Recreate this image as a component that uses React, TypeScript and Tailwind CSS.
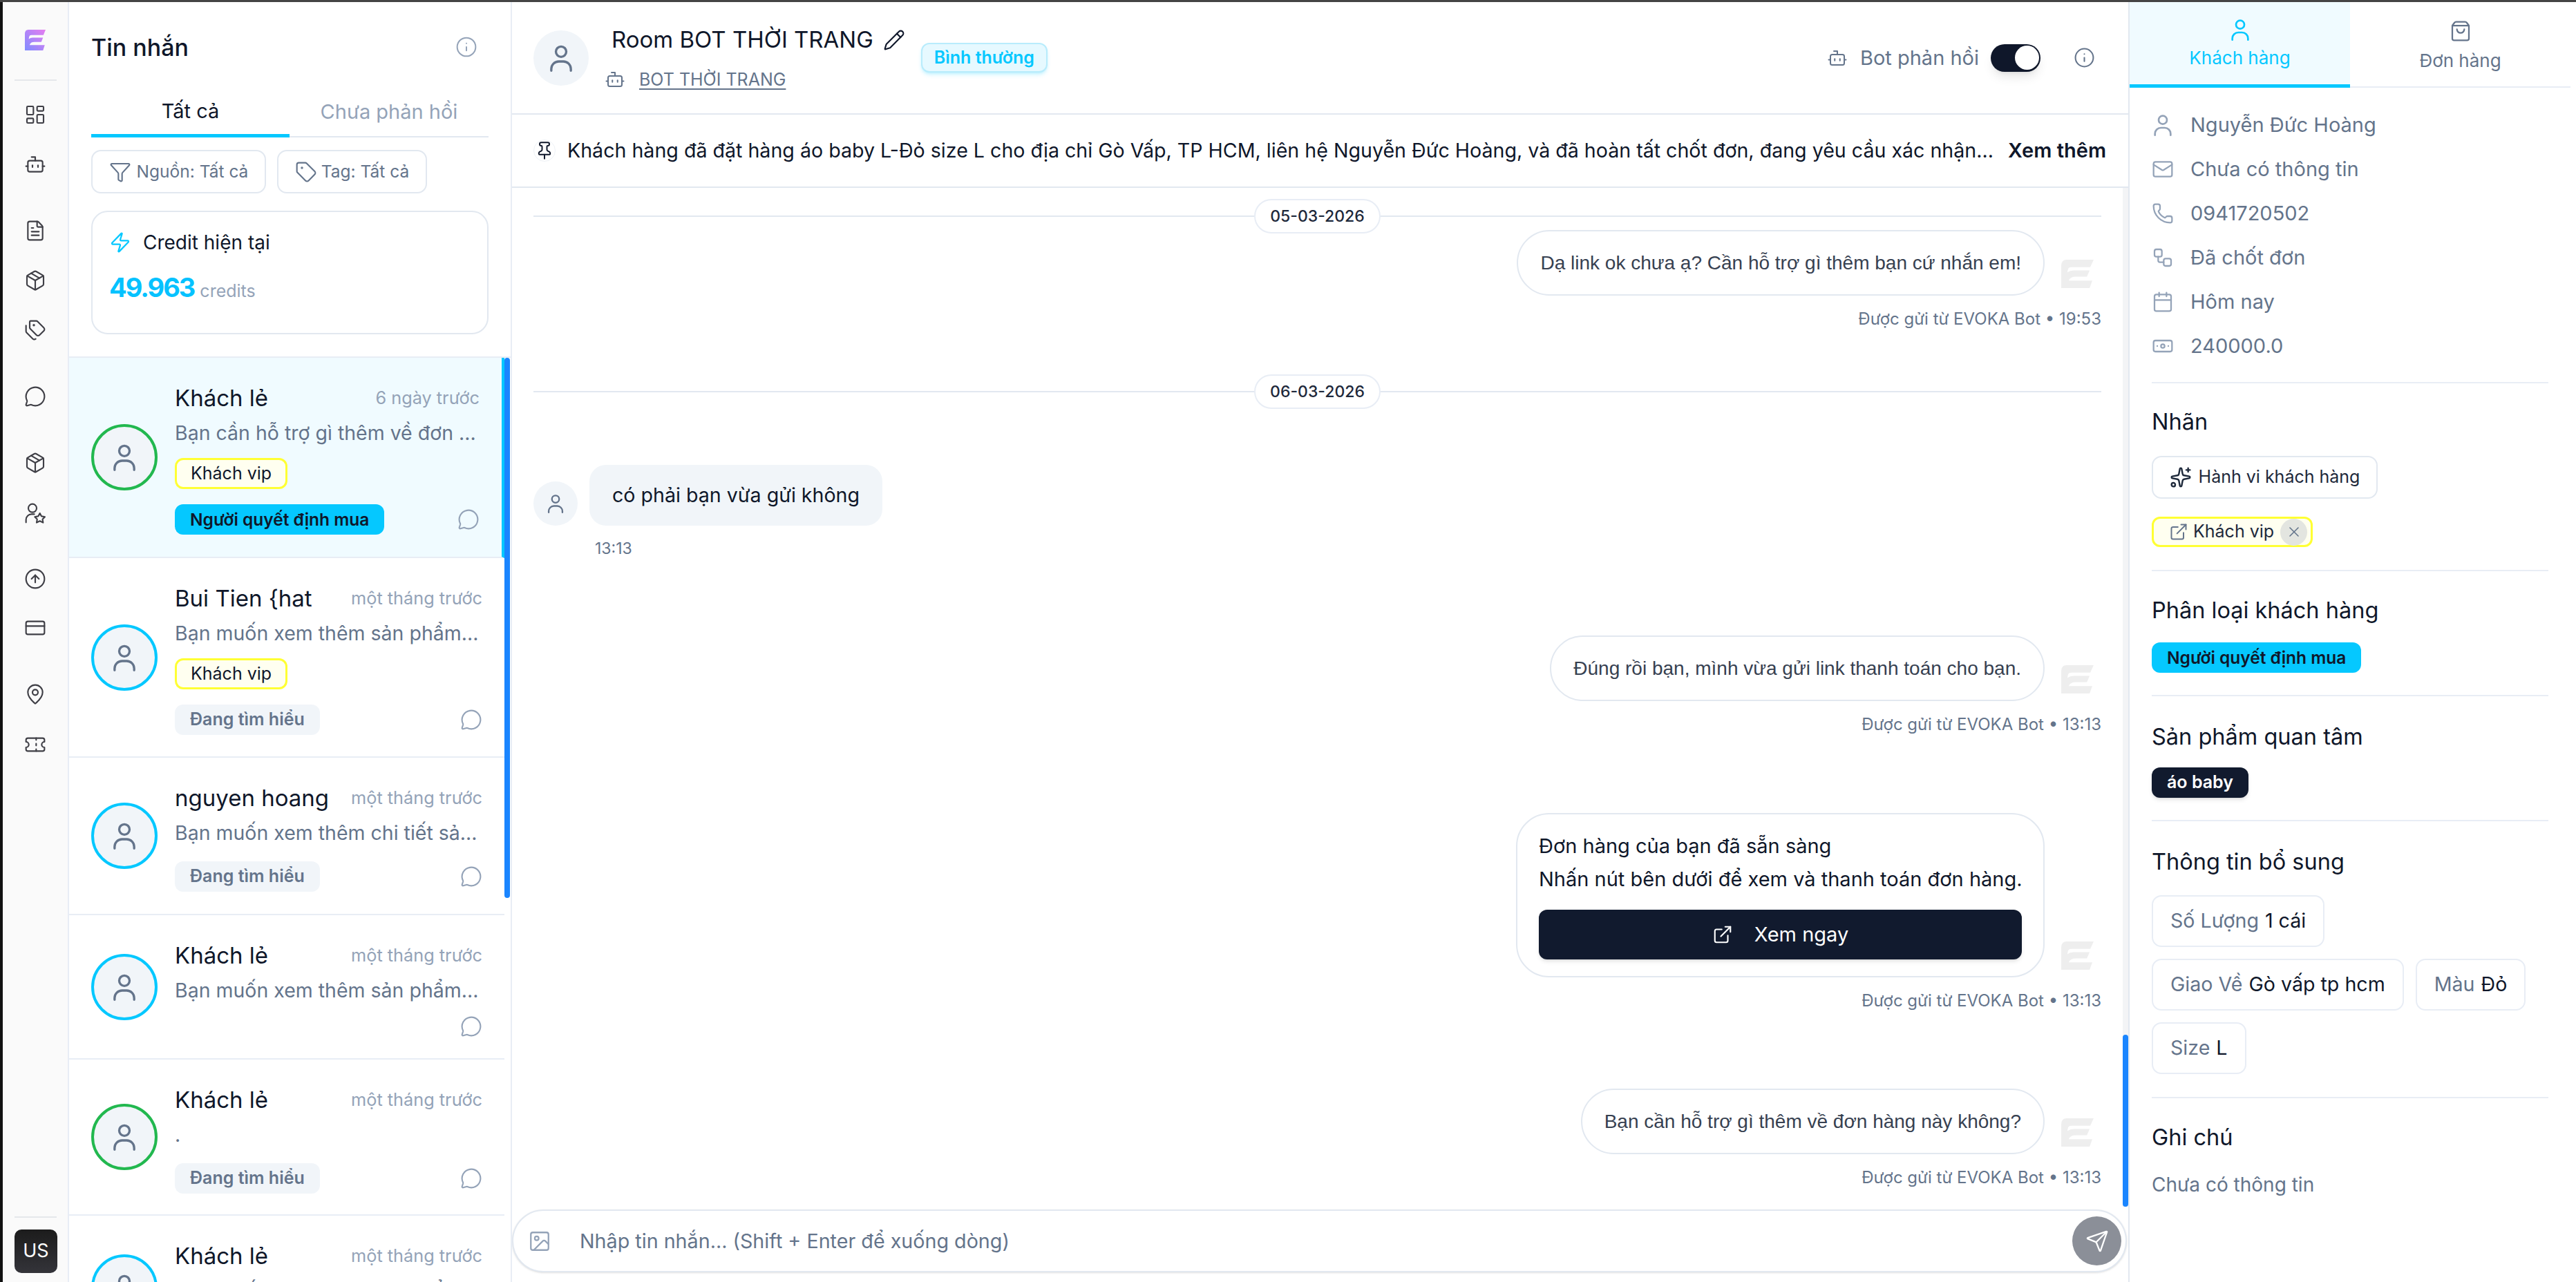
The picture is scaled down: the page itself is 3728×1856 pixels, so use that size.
import React from "react";
import {
  LayoutDashboard,
  Bot,
  FileText,
  Package,
  Tags,
  MessageCircle,
  CircleArrowUp,
  CreditCard,
  MapPin,
  Ticket,
  Info,
  Funnel,
  Tag,
  Zap,
  Pencil,
  Pin,
  Image,
  Send,
  Mail,
  Phone,
  Workflow,
  Calendar,
  Banknote,
  ExternalLink,
  Sparkles,
  X,
  ShoppingBag,
} from "lucide-react";

const EVOKA_PATH =
  "M8 0H48L43 11H15Q11 11 10 14L9 19Q13 16 18 16H42L38 25H22Q13 25 11 31H46L42 42H0V9Q0 0 8 0Z";

const Person = ({ className }: { className: string }) => (
  <svg viewBox="0 0 24 24" fill="none" stroke="currentColor" strokeWidth="2" strokeLinecap="round" className={className}>
    <circle cx="12" cy="6.5" r="4.5" />
    <path d="M3.5 23v-1.5a6.5 6.5 0 0 1 6.5-6.5h4a6.5 6.5 0 0 1 6.5 6.5V23" />
  </svg>
);

const UserStarIcon = ({ className }: { className: string }) => (
  <svg viewBox="0 0 24 24" fill="none" stroke="currentColor" strokeWidth="1.6" strokeLinecap="round" strokeLinejoin="round" className={className}>
    <circle cx="9" cy="6.5" r="4.5" />
    <path d="M2 22v-3a6 6 0 0 1 6-6h3" />
    <path d="m17 12 1.8 3.3 3.7.6-2.6 2.6.6 3.7-3.5-1.7-3.5 1.7.6-3.7-2.6-2.6 3.7-.6z" />
  </svg>
);

const Logo = () => (
  <svg viewBox="0 0 48 42" className="h-[30px] w-[30px]" preserveAspectRatio="none">
    <defs>
      <linearGradient id="evokaGrad" x1="0" y1="1" x2="1" y2="0">
        <stop offset="0" stopColor="#7f8cff" />
        <stop offset="1" stopColor="#e77df0" />
      </linearGradient>
    </defs>
    <path d={EVOKA_PATH} fill="url(#evokaGrad)" />
  </svg>
);

const Watermark = () => (
  <svg viewBox="0 0 48 42" className="mb-[11px] ml-[24px] h-[41px] w-[47px] shrink-0">
    <path d={EVOKA_PATH} fill="#eeeeee" />
  </svg>
);

const navIconClass = "h-[32px] w-[32px] text-[#3f3f46]";

const Nav = () => (
  <nav className="flex w-[96px] shrink-0 flex-col items-center border-r-2 border-[#e8edf5] bg-[#fafafa]">
    <div className="mt-[40px]">
      <Logo />
    </div>
    <div className="mt-[42px] h-[2px] w-[61px] bg-[#e5e7eb]" />
    <div className="mt-[33px]"><LayoutDashboard strokeWidth={1.6} className={navIconClass} /></div>
    <div className="mt-[40px]"><Bot strokeWidth={1.6} className={navIconClass} /></div>
    <div className="mt-[64px]"><FileText strokeWidth={1.6} className={navIconClass} /></div>
    <div className="mt-[40px]"><Package strokeWidth={1.6} className={navIconClass} /></div>
    <div className="mt-[40px]"><Tags strokeWidth={1.6} className={navIconClass} /></div>
    <div className="mt-[64px]"><MessageCircle strokeWidth={1.6} className={navIconClass} /></div>
    <div className="mt-[64px]"><Package strokeWidth={1.6} className={navIconClass} /></div>
    <div className="mt-[41px]"><UserStarIcon className={navIconClass} /></div>
    <div className="mt-[63px]"><CircleArrowUp strokeWidth={1.6} className={navIconClass} /></div>
    <div className="mt-[39px]"><CreditCard strokeWidth={1.6} className={navIconClass} /></div>
    <div className="mt-[64px]"><MapPin strokeWidth={1.6} className={navIconClass} /></div>
    <div className="mt-[41px]"><Ticket strokeWidth={1.6} className={navIconClass} /></div>
    <div className="mt-auto h-[2px] w-[61px] bg-[#e5e7eb]" />
    <div className="ml-[2px] mb-[13px] mt-[17px] flex h-[63px] w-[62px] items-center justify-center rounded-[10px] bg-gradient-to-b from-[#1c1c1c] to-[#34343a] text-[27px] text-white">
      US
    </div>
  </nav>
);

type Conversation = {
  name: string;
  time: string;
  preview: string;
  ring: string;
  pb: string;
  vip?: boolean;
  stage?: "buyer" | "looking";
  selected?: boolean;
};

const conversations: Conversation[] = [
  { name: "Khách lẻ", time: "6 ngày trước", preview: "Bạn cần hỗ trợ gì thêm về đơn ...", ring: "border-[#22b84f]", pb: "pb-[32px]", vip: true, stage: "buyer", selected: true },
  { name: "Bui Tien {hat", time: "một tháng trước", preview: "Bạn muốn xem thêm sản phẩm...", ring: "border-[#05c8ff]", pb: "pb-[31px]", vip: true, stage: "looking" },
  { name: "nguyen hoang", time: "một tháng trước", preview: "Bạn muốn xem thêm chi tiết sả...", ring: "border-[#05c8ff]", pb: "pb-[32px]", stage: "looking" },
  { name: "Khách lẻ", time: "một tháng trước", preview: "Bạn muốn xem thêm sản phẩm...", ring: "border-[#05c8ff]", pb: "pb-[30px]" },
  { name: "Khách lẻ", time: "một tháng trước", preview: ".", ring: "border-[#22b84f]", pb: "pb-[30px]", stage: "looking" },
  { name: "Khách lẻ", time: "một tháng trước", preview: "Bạn muốn xem thêm sản phẩm...", ring: "border-[#05c8ff]", pb: "pb-[30px]" },
];

const VipChip = () => (
  <div className="flex h-[45px] w-fit items-center rounded-[12px] border-[3px] border-[#ffff33] bg-[#fffff0] px-[20px] text-[25px] text-[#0f172a]">
    Khách vip
  </div>
);

const ConversationRow = ({ c }: { c: Conversation }) => (
  <div className={`flex items-center border-b-2 border-[#e8edf5] pl-[32px] pr-[32px] ${c.selected ? "border-r-4 border-r-[#05c8ff] bg-[#f0fbff]" : ""}`}>
    <div className={`flex h-[96px] w-[96px] shrink-0 items-center justify-center rounded-full border-4 bg-[#f1f5f9] ${c.ring}`}>
      <Person className="h-[40px] w-[40px] text-[#64748b]" />
    </div>
    <div className={`ml-[25px] min-w-0 flex-1 pt-[38px] ${c.pb}`}>
      <div className="flex h-[40px] items-center justify-between">
        <span className="text-[33px] leading-[40px] text-[#0f172a]">{c.name}</span>
        <span className="text-[25.3px] text-[#94a3b8]">{c.time}</span>
      </div>
      <div className="mt-[11px] h-[40px] whitespace-nowrap text-[28.5px] leading-[40px] text-[#64748b]">{c.preview}</div>
      {c.vip && (
        <div className="mt-[16px]">
          <VipChip />
        </div>
      )}
      <div className={`flex items-center justify-between ${c.vip ? "mt-[22px]" : c.stage ? "mt-[21px]" : "mt-[16px]"}`}>
        {c.stage === "buyer" && (
          <div className="flex h-[44px] items-center rounded-[12px] bg-[#05c8ff] px-[22px] text-[24.5px] font-semibold text-[#0f172a]">
            Người quyết định mua
          </div>
        )}
        {c.stage === "looking" && (
          <div className="flex h-[44px] items-center rounded-[12px] bg-[#f1f5f9] px-[22px] text-[25px] font-semibold text-[#64748b]">
            Đang tìm hiểu
          </div>
        )}
        <MessageCircle strokeWidth={1.6} className="ml-auto h-[32px] w-[32px] text-[#94a3b8]" />
      </div>
    </div>
  </div>
);

const ConversationPanel = () => (
  <aside className="relative flex w-[641px] shrink-0 flex-col overflow-hidden border-r-2 border-[#e8edf5] bg-white">
    <div className="px-[32px]">
      <div className="flex h-[130px] items-center justify-between pr-[16px]">
        <h1 className="text-[34px] font-medium text-[#0f172a]">Tin nhắn</h1>
        <Info strokeWidth={1.5} className="h-[32px] w-[32px] text-[#94a3b8]" />
      </div>
      <div className="flex h-[66px] border-b-2 border-[#e2e8f0]">
        <div className="-mb-[2px] flex w-[287px] items-center justify-center border-b-[5px] border-[#05c8ff] pb-[6px] text-[29px] text-[#0f172a]">Tất cả</div>
        <div className="flex flex-1 items-center justify-center pb-[6px] text-[29px] text-[#94a3b8]">Chưa phản hồi</div>
      </div>
      <div className="mt-[18px] flex gap-[16px]">
        <div className="flex h-[63px] w-[253px] items-center justify-center gap-[8px] rounded-[14px] border-2 border-[#e2e8f0] text-[24.5px] text-[#64748b]">
          <Funnel strokeWidth={1.6} className="h-[32px] w-[32px]" />
          Nguồn: Tất cả
        </div>
        <div className="flex h-[63px] w-[217px] items-center justify-center gap-[6px] rounded-[14px] border-2 border-[#e2e8f0] text-[24.5px] text-[#64748b]">
          <Tag strokeWidth={1.6} className="h-[32px] w-[32px]" />
          Tag: Tất cả
        </div>
      </div>
      <div className="mt-[25px] h-[179px] rounded-[24px] border-2 border-[#e2e8f0] px-[24px] pt-[23px]">
        <div className="flex items-center gap-[17px] text-[28px] text-[#0f172a]">
          <Zap strokeWidth={1.7} className="h-[32px] w-[32px] text-[#05c8ff]" />
          Credit hiện tại
        </div>
        <div className="mt-[16px] flex items-baseline gap-[8px]">
          <span className="text-[38px] font-bold tracking-[-2px] text-[#05c2ff]">49.963</span>
          <span className="text-[25px] text-[#94a3b8]">credits</span>
        </div>
      </div>
    </div>
    <div className="mt-[32px] border-t-2 border-[#e8edf5] pr-[9px]">
      {conversations.map((c, i) => (
        <ConversationRow key={i} c={c} />
      ))}
    </div>
    <div className="absolute right-[1px] top-[515px] h-[782px] w-[8px] rounded-[4px] bg-[#1a85ff]" />
  </aside>
);

const DateSeparator = ({ label, className }: { label: string; className: string }) => (
  <div className={`flex h-[50px] items-center ${className}`}>
    <div className="h-[2px] flex-1 bg-[#e2e8f0]" />
    <div className="flex h-[50px] w-[183px] items-center justify-center rounded-full border-2 border-[#e8edf5] bg-white text-[23px] font-medium text-[#1e293b]">
      {label}
    </div>
    <div className="h-[2px] flex-1 bg-[#e2e8f0]" />
  </div>
);

const BotMessage = ({ time, className, children }: { time: string; className: string; children: React.ReactNode }) => (
  <div className={`flex flex-col items-end ${className}`}>
    <div className="flex items-end pr-[11px]">{children}<Watermark /></div>
    <div className="mt-[20px] text-[24px] leading-[28px] text-[#64748b]">Được gửi từ EVOKA Bot • {time}</div>
  </div>
);

const TextBubble = ({ text }: { text: string }) => (
  <div className="flex h-[95px] items-center rounded-[48px] border-2 border-[#e2e8f0] bg-white px-[32px] font-['Liberation_Sans',sans-serif] text-[28px] text-[#374151]">
    {text}
  </div>
);

const ChatHeader = () => (
  <header className="flex h-[163px] shrink-0 items-center border-b-2 border-[#e2e8f0] pl-[31px] pr-[48px]">
    <div className="flex h-[80px] w-[80px] items-center justify-center rounded-full bg-[#f1f5f9]">
      <Person className="h-[40px] w-[40px] text-[#64748b]" />
    </div>
    <div className="ml-[33px]">
      <div className="flex items-center gap-[14px] text-[33px] text-[#0f172a]">
        Room BOT THỜI TRANG
        <Pencil strokeWidth={1.6} className="h-[32px] w-[32px]" />
      </div>
      <div className="mt-[14px] flex items-center gap-[20px] text-[25px] text-[#64748b]">
        <Bot strokeWidth={1.6} className="-ml-[10px] h-[30px] w-[30px]" />
        <span className="underline underline-offset-4">BOT THỜI TRANG</span>
      </div>
    </div>
    <div className="ml-[23px] flex h-[43px] w-[183px] items-center justify-center rounded-[12px] border-2 border-[#b8ecfc] bg-[#e6f9ff] text-[25px] font-semibold text-[#05c8ff] shadow-md shadow-[#05c8ff]/20">
      Bình thường
    </div>
    <div className="ml-auto flex items-center">
      <Bot strokeWidth={1.6} className="h-[30px] w-[30px] text-[#64748b]" />
      <span className="ml-[18px] text-[29px] text-[#64748b]">Bot phản hồi</span>
      <div className="ml-[17px] flex h-[40px] w-[72px] items-center justify-end rounded-full bg-[#0f172a] px-[2px] shadow-lg">
        <div className="h-[35px] w-[35px] rounded-full bg-white" />
      </div>
      <Info strokeWidth={1.6} className="ml-[48px] h-[31px] w-[31px] text-[#64748b]" />
    </div>
  </header>
);

const ChatPanel = () => (
  <main className="relative flex min-w-0 flex-1 flex-col overflow-hidden">
    <ChatHeader />
    <div className="flex h-[106px] shrink-0 items-center border-b-2 border-[#e2e8f0] pl-[31px] pr-[32px] text-[28.6px] text-[#0f172a]">
      <span className="flex h-[32px] w-[32px] shrink-0 items-center justify-center rounded-full border border-[#eef2f6]">
        <Pin strokeWidth={1.7} className="h-[28px] w-[28px]" />
      </span>
      <span className="ml-[17px] min-w-0 flex-1 whitespace-nowrap">
        Khách hàng đã đặt hàng áo baby L-Đỏ size L cho địa chỉ Gò Vấp, TP HCM, liên hệ Nguyễn Đức Hoàng, và đã hoàn tất chốt đơn, đang yêu cầu xác nhận...
      </span>
      <span className="ml-[20px] shrink-0 text-[29px] font-semibold">Xem thêm</span>
    </div>
    <div className="flex min-h-0 flex-1">
      <div className="min-w-0 flex-1 pl-[31px] pr-[39px] pt-[16px]">
        <DateSeparator label="05-03-2026" className="" />
        <BotMessage time="19:53" className="-mt-[5px]">
          <TextBubble text="Dạ link ok chưa ạ? Cần hỗ trợ gì thêm bạn cứ nhắn em!" />
        </BotMessage>
        <DateSeparator label="06-03-2026" className="mt-[66px]" />
        <div className="mt-[81px] flex items-center">
          <div className="mt-[24px] flex h-[64px] w-[64px] items-center justify-center rounded-full bg-[#f1f5f9]">
            <Person className="h-[28px] w-[28px] text-[#64748b]" />
          </div>
          <div className="ml-[17px] flex h-[88px] items-center rounded-[24px] bg-[#f1f5f9] px-[33px] text-[28.6px] text-[#0f172a]">
            có phải bạn vừa gửi không
          </div>
        </div>
        <div className="ml-[89px] mt-[19px] text-[23px] leading-[28px] text-[#64748b]">13:13</div>
        <BotMessage time="13:13" className="mt-[112px]">
          <TextBubble text="Đúng rồi bạn, mình vừa gửi link thanh toán cho bạn." />
        </BotMessage>
        <BotMessage time="13:13" className="mt-[114px]">
          <div className="w-[765px] rounded-[48px] border-2 border-[#e2e8f0] bg-white px-[31px] pt-[22px]">
            <div className="text-[29px] leading-[48px] text-[#0f172a]">Đơn hàng của bạn đã sẵn sàng</div>
            <div className="whitespace-nowrap text-[29px] leading-[48px] text-[#0f172a]">Nhấn nút bên dưới để xem và thanh toán đơn hàng.</div>
            <div className="mb-[24px] mt-[20px] flex h-[72px] items-center justify-center gap-[31px] rounded-[12px] bg-[#111a2e] text-[29px] text-white shadow-md">
              <ExternalLink strokeWidth={1.7} className="h-[30px] w-[30px]" />
              Xem ngay
            </div>
          </div>
        </BotMessage>
        <BotMessage time="13:13" className="mt-[113px]">
          <TextBubble text="Bạn cần hỗ trợ gì thêm về đơn hàng này không?" />
        </BotMessage>
      </div>
    </div>
    <div className="mb-[14px] mr-[2px] flex h-[91px] shrink-0 items-center rounded-[46px] border-2 border-[#e2e8f0] bg-white pl-[21px] pr-[6px] shadow-sm">
      <Image strokeWidth={1.6} className="h-[34px] w-[34px] text-[#94a3b8]" />
      <span className="ml-[41px] text-[28.7px] text-[#64748b]">Nhập tin nhắn... (Shift + Enter để xuống dòng)</span>
      <div className="ml-auto flex h-[71px] w-[71px] items-center justify-center rounded-full bg-[#8b8f98]">
        <Send strokeWidth={1.6} className="h-[34px] w-[34px] text-white" />
      </div>
    </div>
    <div className="absolute right-0 top-[269px] h-[1475px] w-[8px] bg-[#f3f4f6]">
      <div className="absolute bottom-0 h-[249px] w-full rounded-[4px] bg-[#1a85ff]" />
    </div>
  </main>
);

const infoRows = [
  { Icon: Person, text: "Nguyễn Đức Hoàng" },
  { Icon: Mail, text: "Chưa có thông tin" },
  { Icon: Phone, text: "0941720502" },
  { Icon: Workflow, text: "Đã chốt đơn" },
  { Icon: Calendar, text: "Hôm nay" },
  { Icon: Banknote, text: "240000.0" },
];

const attributes = [
  { k: "Số Lượng", v: "1 cái" },
  { k: "Giao Về", v: "Gò vấp tp hcm" },
  { k: "Màu", v: "Đỏ" },
  { k: "Size", v: "L" },
];

const SectionTitle = ({ children }: { children: React.ReactNode }) => (
  <h2 className="text-[32.5px] leading-[40px] text-[#0f172a]">{children}</h2>
);

const CustomerPanel = () => (
  <aside className="w-[648px] shrink-0 border-l-2 border-[#e2e8f0] pr-[8px]">
    <div className="flex h-[124px] border-b-2 border-[#e8edf5]">
      <div className="-mb-[2px] flex w-[319px] flex-col items-center border-b-[5px] border-[#05c8ff] bg-[#f0fbff] pt-[24px] text-[26px] text-[#05c8ff]">
        <Person className="h-[32px] w-[32px]" />
        <span className="mt-[5px]">Khách hàng</span>
      </div>
      <div className="flex flex-1 flex-col items-center pt-[26px] text-[26px] text-[#64748b]">
        <ShoppingBag strokeWidth={1.7} className="h-[32px] w-[32px]" />
        <span className="mt-[7px]">Đơn hàng</span>
      </div>
    </div>
    <div className="px-[32px]">
      <div className="flex flex-col gap-[24px] pt-[34px]">
        {infoRows.map(({ Icon, text }) => (
          <div key={text} className="flex h-[40px] items-center gap-[24px] text-[29px] text-[#64748b]">
            <Icon strokeWidth={1.7} className="h-[32px] w-[32px] text-[#94a3b8]" />
            {text}
          </div>
        ))}
      </div>
      <div className="mt-[32px] border-t-2 border-[#e8edf5] pt-[36px]">
        <SectionTitle>Nhãn</SectionTitle>
        <div className="mt-[29px] flex h-[62px] w-[327px] items-center justify-center gap-[10px] rounded-[14px] border-2 border-[#e2e8f0] text-[25px] text-[#1e293b]">
          <Sparkles strokeWidth={1.8} className="h-[32px] w-[32px]" />
          Hành vi khách hàng
        </div>
        <div className="mt-[26px] flex h-[44px] w-[233px] items-center rounded-[12px] border-[3px] border-[#ffff33] bg-[#fffff0] pl-[22px] pr-[5px] text-[25px] text-[#1e293b]">
          <ExternalLink strokeWidth={1.7} className="h-[28px] w-[28px] text-[#64748b]" />
          <span className="ml-[7px]">Khách vip</span>
          <span className="ml-auto flex h-[39px] w-[39px] items-center justify-center rounded-full bg-[#e3e5e0]">
            <X strokeWidth={1.6} className="h-[24px] w-[24px] text-[#64748b]" />
          </span>
        </div>
      </div>
      <div className="mt-[33px] border-t-2 border-[#e8edf5] pt-[37px]">
        <SectionTitle>Phân loại khách hàng</SectionTitle>
        <div className="mt-[26px] flex h-[44px] w-fit items-center rounded-[12px] bg-[#05c8ff] px-[22px] text-[24.5px] font-semibold text-[#0f172a]">
          Người quyết định mua
        </div>
      </div>
      <div className="mt-[32px] border-t-2 border-[#e8edf5] pt-[39px]">
        <SectionTitle>Sản phẩm quan tâm</SectionTitle>
        <div className="mt-[24px] flex h-[44px] w-fit items-center rounded-[12px] bg-[#111a2e] px-[22px] text-[25px] font-semibold text-white shadow-md">
          áo baby
        </div>
      </div>
      <div className="mt-[32px] border-t-2 border-[#e8edf5] pt-[39px]">
        <SectionTitle>Thông tin bổ sung</SectionTitle>
        <div className="mt-[28px] flex flex-wrap gap-[17px]">
          {attributes.map((a) => (
            <div key={a.k} className={`flex h-[75px] items-center gap-[9px] rounded-[14px] border-2 border-[#e8edf5] px-[25px] text-[28.6px] ${a.k === "Số Lượng" ? "mr-[200px]" : ""}`}>
              <span className="text-[#64748b]">{a.k}</span>
              <span className="text-[#0f172a]">{a.v}</span>
            </div>
          ))}
        </div>
      </div>
      <div className="mt-[33px] border-t-2 border-[#e8edf5] pt-[37px]">
        <SectionTitle>Ghi chú</SectionTitle>
        <div className="mt-[28px] text-[28px] leading-[40px] text-[#64748b]">Chưa có thông tin</div>
      </div>
    </div>
  </aside>
);

export default function App() {
  return (
    <div className="flex h-screen w-screen flex-col overflow-hidden bg-white font-['Inter',sans-serif]">
      <div className="h-[3px] shrink-0 bg-[#444444]" />
      <div className="flex min-h-0 flex-1">
        <div className="w-[4px] shrink-0 bg-[#111111]" />
        <Nav />
        <ConversationPanel />
        <ChatPanel />
        <CustomerPanel />
      </div>
    </div>
  );
}
